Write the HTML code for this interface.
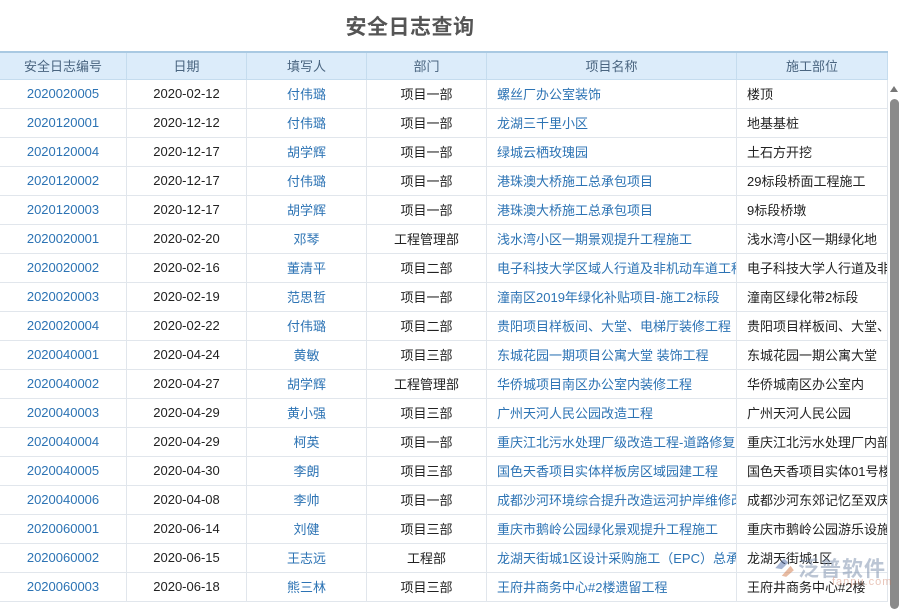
<!DOCTYPE html>
<html><head><meta charset="utf-8"><style>
*{margin:0;padding:0;box-sizing:border-box}
body{width:900px;height:600px;overflow:hidden;background:#fff;font-family:"Liberation Sans","Noto Sans CJK SC",sans-serif;position:relative}
h1{position:absolute;left:0;top:11px;width:820px;text-align:center;font-size:21px;color:#555;font-weight:bold;letter-spacing:0.5px}
table{position:absolute;left:-1px;top:51px;border-collapse:collapse;table-layout:fixed;width:888px}
td,th{height:29px;border:1px solid #e1e6ec;font-size:13px;white-space:nowrap;overflow:hidden;text-align:center;font-weight:normal;color:#222}
th{background:#dcecfa;color:#4a6580;height:27px;border-color:#c5dcee;border-top:2px solid #a9c9e2}
td.b{color:#2c73b4}
td.l{text-align:left;padding-left:10px}
td.n{text-align:left;padding-left:10px;color:#222}
.sb{position:absolute;left:890px;top:99px;width:9px;height:510px;background:#8a8a8a;border-radius:5px}
.ar{position:absolute;left:890px;top:86px;width:0;height:0;border-left:4.5px solid transparent;border-right:4.5px solid transparent;border-bottom:6px solid #777}
.wm{position:absolute;left:798px;top:553px;font-size:21px;color:rgba(120,140,170,0.5);font-weight:bold;letter-spacing:1px}
.wm2{position:absolute;left:832px;top:576px;font-size:11px;color:rgba(200,110,80,0.4);letter-spacing:1px}
.lg{position:absolute;left:772px;top:555px;width:24px;height:24px}
</style></head><body>
<h1>安全日志查询</h1>
<table>
<colgroup><col style="width:127px"><col style="width:120px"><col style="width:120px"><col style="width:120px"><col style="width:250px"><col style="width:151px"></colgroup>
<tr><th>安全日志编号</th><th>日期</th><th>填写人</th><th>部门</th><th>项目名称</th><th>施工部位</th></tr>
<tr><td class="b">2020020005</td><td>2020-02-12</td><td class="b">付伟璐</td><td>项目一部</td><td class="b l">螺丝厂办公室装饰</td><td class="n">楼顶</td></tr>
<tr><td class="b">2020120001</td><td>2020-12-12</td><td class="b">付伟璐</td><td>项目一部</td><td class="b l">龙湖三千里小区</td><td class="n">地基基桩</td></tr>
<tr><td class="b">2020120004</td><td>2020-12-17</td><td class="b">胡学辉</td><td>项目一部</td><td class="b l">绿城云栖玫瑰园</td><td class="n">土石方开挖</td></tr>
<tr><td class="b">2020120002</td><td>2020-12-17</td><td class="b">付伟璐</td><td>项目一部</td><td class="b l">港珠澳大桥施工总承包项目</td><td class="n">29标段桥面工程施工</td></tr>
<tr><td class="b">2020120003</td><td>2020-12-17</td><td class="b">胡学辉</td><td>项目一部</td><td class="b l">港珠澳大桥施工总承包项目</td><td class="n">9标段桥墩</td></tr>
<tr><td class="b">2020020001</td><td>2020-02-20</td><td class="b">邓琴</td><td>工程管理部</td><td class="b l">浅水湾小区一期景观提升工程施工</td><td class="n">浅水湾小区一期绿化地</td></tr>
<tr><td class="b">2020020002</td><td>2020-02-16</td><td class="b">董清平</td><td>项目二部</td><td class="b l">电子科技大学区域人行道及非机动车道工程</td><td class="n">电子科技大学人行道及非</td></tr>
<tr><td class="b">2020020003</td><td>2020-02-19</td><td class="b">范思哲</td><td>项目一部</td><td class="b l">潼南区2019年绿化补贴项目-施工2标段</td><td class="n">潼南区绿化带2标段</td></tr>
<tr><td class="b">2020020004</td><td>2020-02-22</td><td class="b">付伟璐</td><td>项目二部</td><td class="b l">贵阳项目样板间、大堂、电梯厅装修工程</td><td class="n">贵阳项目样板间、大堂、</td></tr>
<tr><td class="b">2020040001</td><td>2020-04-24</td><td class="b">黄敏</td><td>项目三部</td><td class="b l">东城花园一期项目公寓大堂 装饰工程</td><td class="n">东城花园一期公寓大堂</td></tr>
<tr><td class="b">2020040002</td><td>2020-04-27</td><td class="b">胡学辉</td><td>工程管理部</td><td class="b l">华侨城项目南区办公室内装修工程</td><td class="n">华侨城南区办公室内</td></tr>
<tr><td class="b">2020040003</td><td>2020-04-29</td><td class="b">黄小强</td><td>项目三部</td><td class="b l">广州天河人民公园改造工程</td><td class="n">广州天河人民公园</td></tr>
<tr><td class="b">2020040004</td><td>2020-04-29</td><td class="b">柯英</td><td>项目一部</td><td class="b l">重庆江北污水处理厂级改造工程-道路修复</td><td class="n">重庆江北污水处理厂内部</td></tr>
<tr><td class="b">2020040005</td><td>2020-04-30</td><td class="b">李朗</td><td>项目三部</td><td class="b l">国色天香项目实体样板房区域园建工程</td><td class="n">国色天香项目实体01号楼</td></tr>
<tr><td class="b">2020040006</td><td>2020-04-08</td><td class="b">李帅</td><td>项目一部</td><td class="b l">成都沙河环境综合提升改造运河护岸维修改</td><td class="n">成都沙河东郊记忆至双庆</td></tr>
<tr><td class="b">2020060001</td><td>2020-06-14</td><td class="b">刘健</td><td>项目三部</td><td class="b l">重庆市鹅岭公园绿化景观提升工程施工</td><td class="n">重庆市鹅岭公园游乐设施</td></tr>
<tr><td class="b">2020060002</td><td>2020-06-15</td><td class="b">王志远</td><td>工程部</td><td class="b l">龙湖天街城1区设计采购施工（EPC）总承包</td><td class="n">龙湖天街城1区</td></tr>
<tr><td class="b">2020060003</td><td>2020-06-18</td><td class="b">熊三林</td><td>项目三部</td><td class="b l">王府井商务中心#2楼遗留工程</td><td class="n">王府井商务中心#2楼</td></tr>
</table>
<div class="ar"></div><div class="sb"></div>
<svg class="lg" viewBox="0 0 22 22"><path d="M3 12 L11 3 L15 7 L9 13 Z" fill="rgba(80,110,170,0.5)"/><path d="M9 19 L17 10 L20 14 L13 20 Z" fill="rgba(210,120,70,0.5)"/></svg>
<div class="wm">泛普软件</div>
<div class="wm2">fanpu.com</div>
</body></html>
